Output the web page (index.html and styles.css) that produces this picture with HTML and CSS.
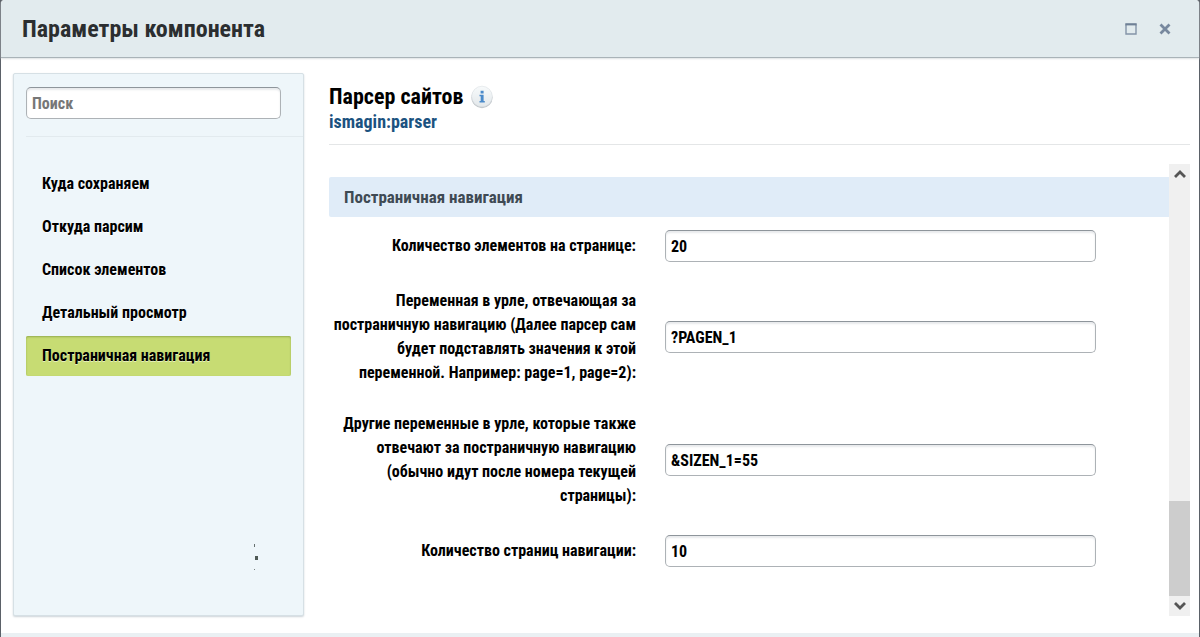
FILE: index.html
```
<!DOCTYPE html>
<html lang="ru">
<head>
<meta charset="utf-8">
<title>Параметры компонента</title>
<link rel="stylesheet" href="styles.css">
</head>
<body>
<div class="dialog">
  <header class="titlebar">
    <h1 class="title">Параметры компонента</h1>
    <div class="window-actions">
      <button class="icon-button" type="button" aria-label="Развернуть">
        <svg width="12" height="12" viewBox="0 0 12 12"><path d="M1 1.5V11H11V1.5" fill="none" stroke="#8494a8" stroke-width="1.4"/><path d="M.3 1.3H11.7" stroke="#6f8096" stroke-width="2.2"/></svg>
      </button>
      <button class="icon-button" type="button" aria-label="Закрыть">
        <svg width="12" height="12" viewBox="0 0 12 12"><path d="M1.5 1.5L10.5 10.5M10.5 1.5L1.5 10.5" fill="none" stroke="#77889e" stroke-width="2.8"/></svg>
      </button>
    </div>
  </header>
  <div class="content">
    <aside class="sidebar">
      <div class="search">
        <input class="field" type="text" placeholder="Поиск" aria-label="Поиск">
      </div>
      <nav class="menu">
        <a class="menu-item" href="#save">Куда сохраняем</a>
        <a class="menu-item" href="#source">Откуда парсим</a>
        <a class="menu-item" href="#list">Список элементов</a>
        <a class="menu-item" href="#detail">Детальный просмотр</a>
        <a class="menu-item menu-item-active" href="#pages">Постраничная навигация</a>
      </nav>
      <svg class="specks" width="6" height="30" viewBox="0 0 6 30" aria-hidden="true"><path d="M1 1h1v3H1z" fill="#66706f"/><path d="M2 13h3v4H2z" fill="#4f5a55"/><path d="M1 26h1v1H1z" fill="#77807f"/></svg>
    </aside>
    <main class="main">
      <div class="intro">
        <h2 class="component-name">Парсер сайтов
          <svg class="info" width="24" height="24" viewBox="0 0 24 24" role="img" aria-label="Справка"><defs><linearGradient id="disc" x1="0" y1="0" x2="0" y2="1"><stop offset="0" stop-color="#f7fafb"/><stop offset="1" stop-color="#e3e8eb"/></linearGradient></defs><circle cx="12" cy="12.6" r="10.6" fill="#c0c5c9"/><circle cx="12" cy="11.5" r="10.3" fill="url(#disc)" stroke="#dce1e4" stroke-width=".6"/><path d="M10.6 5.8h3v2.6h-3zM9.5 9.7h4.1v6.2h1.2v1.5H9.5v-1.5h1.2v-4.7H9.5z" fill="#4a8aca"/></svg>
        </h2>
        <a class="component-code" href="#parser">ismagin:parser</a>
      </div>
      <div class="scroll-area">
        <form class="form">
          <h3 class="section-title" id="pages">Постраничная навигация</h3>
          <div class="row">
            <label class="label" for="count">Количество элементов на странице:</label>
            <input class="field" id="count" type="text" value="20">
          </div>
          <div class="row">
            <label class="label" for="pagevar">Переменная в урле, отвечающая за<br>постраничную навигацию (Далее парсер сам<br>будет подставлять значения к этой<br>переменной. Например: page=1, page=2):</label>
            <input class="field" id="pagevar" type="text" value="?PAGEN_1">
          </div>
          <div class="row">
            <label class="label" for="othervar">Другие переменные в урле, которые также<br>отвечают за постраничную навигацию<br>(обычно идут после номера текущей<br>страницы):</label>
            <input class="field" id="othervar" type="text" value="&amp;SIZEN_1=55">
          </div>
          <div class="row">
            <label class="label" for="navpages">Количество страниц навигации:</label>
            <input class="field" id="navpages" type="text" value="10">
          </div>
        </form>
        <div class="scrollbar">
          <button class="scroll-button" type="button" aria-label="Вверх"><svg width="12" height="10" viewBox="0 0 12 10"><path d="M1 8L6 3L11 8" fill="none" stroke="#555" stroke-width="2.8"/></svg></button>
          <div class="scroll-track"><div class="scroll-thumb"></div></div>
          <button class="scroll-button" type="button" aria-label="Вниз"><svg width="12" height="10" viewBox="0 0 12 10"><path d="M1 2L6 7L11 2" fill="none" stroke="#555" stroke-width="2.8"/></svg></button>
        </div>
      </div>
    </main>
  </div>
  <footer class="footer"></footer>
</div>
</body>
</html>
```

FILE: styles.css
```
* { box-sizing: border-box; }

body {
  margin: 0;
  background: #5b6168;
  color: #000;
  font: bold 16px/24px "Roboto Condensed", "Liberation Sans Narrow", "Liberation Sans", sans-serif;
}

.dialog {
  display: flex;
  flex-direction: column;
  min-height: 100vh;
  border: solid #5b6168;
  border-width: 0 1px;
  border-radius: 4px 4px 0 0;
  background: #fff;
}

.titlebar {
  display: flex;
  align-items: center;
  justify-content: space-between;
  height: 58px;
  padding: 0 28px 0 21px;
  border-bottom: 1px solid #a9b3b8;
  border-radius: 4px 4px 0 0;
  background: #e2ebee;
  box-shadow: 0 1px 2px #dde1e3;
}

.title {
  margin: 0;
  color: #2b2e30;
  font-size: 24px;
  line-height: 32px;
}

.window-actions { display: flex; gap: 22px; }

.icon-button,
.scroll-button {
  display: flex;
  align-items: center;
  justify-content: center;
  padding: 0;
  border: 0;
  background: none;
}

.content {
  display: flex;
  flex: 1;
  gap: 25px;
  padding: 15px 9px 17px 12px;
}

.sidebar {
  display: flex;
  flex-direction: column;
  flex: 0 0 291px;
  padding-left: 12px;
  border: 1px solid #d6e0e5;
  border-radius: 2px;
  background: #eef6fa;
  box-shadow: 0 1px 2px #ccd3d8;
}

.search {
  padding: 13px 22px 17px 0;
  border-bottom: 1px solid #e2eaee;
}

.field {
  width: 100%;
  height: 32px;
  padding: 0 5px;
  border: 1px solid #adb2b6;
  border-top-color: #8e959b;
  border-radius: 5px;
  background: #fff;
  box-shadow: inset 0 2px 2px #e8eaec;
  color: #000;
  font: inherit;
}

.field::placeholder { color: #777; opacity: 1; }

.menu {
  display: flex;
  flex-direction: column;
  gap: 3px;
  padding: 27px 12px 0 0;
}

.menu-item {
  padding: 8px 16px;
  border-radius: 2px;
  color: #000;
  text-decoration: none;
  text-shadow: 0 1px 0 #fff;
}

.menu-item-active {
  background: #c7dc73;
  box-shadow: inset 0 1px 2px #94ab4f;
  text-shadow: 0 1px 0 #e6f0bd;
}

.specks {
  align-self: flex-end;
  margin: auto 44px 42px 0;
}

.main {
  display: flex;
  flex-direction: column;
  flex: 1;
  min-width: 0;
}

.intro {
  padding: 12px 0 10px;
  border-bottom: 1px solid #e4e6e7;
}

.component-name {
  display: flex;
  align-items: center;
  gap: 7px;
  margin: 0;
  font-size: 22px;
  line-height: 24px;
}

.component-code {
  display: block;
  color: #1b527f;
  font-size: 18px;
  line-height: 25px;
  text-decoration: none;
}

.scroll-area {
  display: flex;
  flex: 1;
  margin-top: 19px;
}

.form {
  display: flex;
  flex-direction: column;
  flex: 1;
  gap: 27px;
  padding-top: 13px;
}

.section-title {
  margin: 0 0 -14px;
  padding: 8px 15px;
  border-radius: 2px 0 0 2px;
  background: #e0ecf8;
  color: #3f4a54;
  font-size: 17px;
  line-height: 24px;
}

.row {
  display: grid;
  grid-template-columns: 307px 1fr;
  gap: 29px;
  align-items: center;
  padding-right: 73px;
}

.label { text-align: right; }

.scrollbar {
  display: flex;
  flex-direction: column;
  flex: 0 0 21px;
  background: #f0f0f0;
}

.scroll-button { height: 20px; }

.scroll-track {
  display: flex;
  flex: 1;
  flex-direction: column;
  justify-content: flex-end;
}

.scroll-thumb {
  height: 23%;
  background: #cdcdcd;
}

.footer {
  height: 4px;
  background: #eaf0f3;
}
```
